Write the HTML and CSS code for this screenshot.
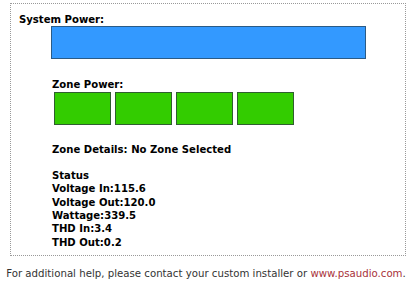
FILE: index.html
```html
<!DOCTYPE html>
<html lang="en">
<head>
    <meta charset="UTF-8">
    <meta name="viewport" content="width=device-width, initial-scale=1.0">
    <title>Power Status</title>
    <link rel="stylesheet" href="styles.css">
</head>
<body>

<div class="panel">
    <div class="label">System Power:</div>
    <div class="system-bar"></div>

    <div class="label zone-label">Zone Power:</div>
    <div class="zones">
        <div class="zone"></div>
        <div class="zone"></div>
        <div class="zone"></div>
        <div class="zone"></div>
    </div>

    <div class="label details">Zone Details: No Zone Selected</div>

    <div class="label status">
        <div>Status</div>
        <div>Voltage In:115.6</div>
        <div>Voltage Out:120.0</div>
        <div>Wattage:339.5</div>
        <div>THD In:3.4</div>
        <div>THD Out:0.2</div>
    </div>
</div>

<p class="help">For additional help, please contact your custom installer or <a href="#">www.psaudio.com</a>.</p>

</body>
</html>
```

FILE: styles.css
```css
body {
    font-family: Verdana, "DejaVu Sans", sans-serif;
    font-size: 10.1px;
    line-height: 13.33px;
    color: #000;
    background: #fff;
    margin: 0;
}
.panel {
    margin: 3px 6px 0 10px;
    border: 1px dotted #999;
    padding: 9px 8px 6px 8px;
}
.label {
    font-weight: bold;
}
.system-bar {
    margin-left: 32px;
    width: 313px;
    height: 31px;
    background: #3399ff;
    border: 1px solid #2b5b86;
}
.zone-label {
    margin-top: 19px;
    margin-left: 33px;
}
.zones {
    display: flex;
    gap: 4px;
    margin-left: 35px;
}
.zone {
    width: 55px;
    height: 31px;
    background: #33cc00;
    border: 1px solid #2f5f2f;
}
.details {
    margin-top: 18px;
    margin-left: 33px;
}
.status {
    margin-top: 13px;
    margin-left: 33px;
}
.help {
    margin: 11px 0 0 0;
    font-size: 10.2px;
    text-align: center;
    color: #333;
}
.help a {
    color: #a8323a;
    text-decoration: none;
}
```
